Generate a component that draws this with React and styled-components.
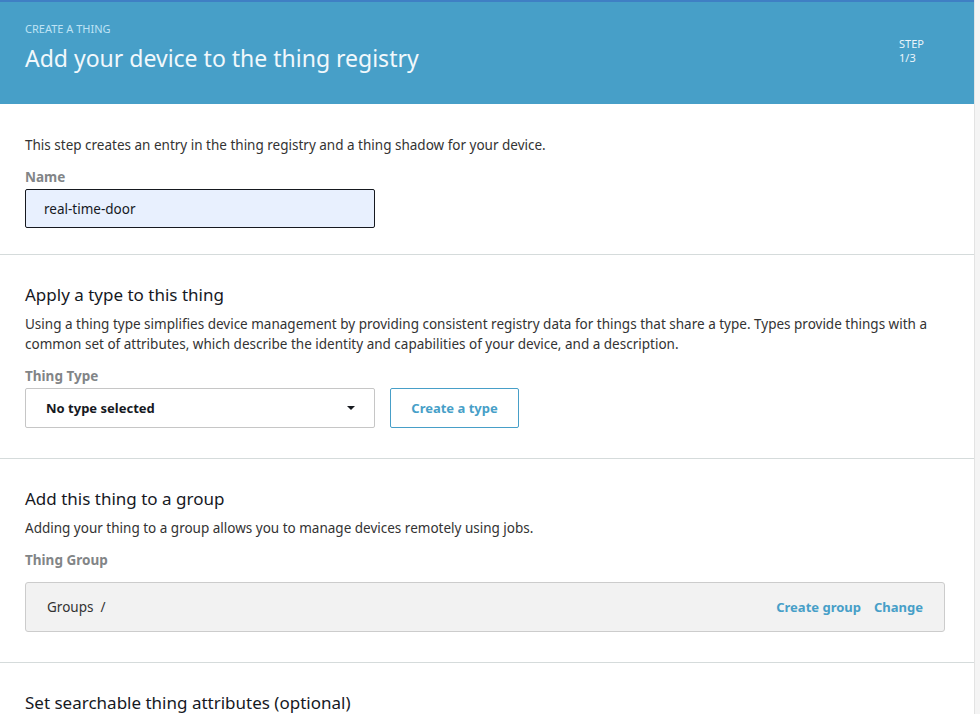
import React from 'react';
import styled, { createGlobalStyle } from 'styled-components';

const GlobalStyle = createGlobalStyle`
  html, body {
    margin: 0;
    padding: 0;
    background: #f4f4f4;
    font-family: "Noto Sans", "Open Sans", sans-serif;
    color: #16191f;
  }
`;

export default () => (
  <>
    <GlobalStyle />
    <Page>
      <Header>
        <HeaderText>
          <Eyebrow>CREATE A THING</Eyebrow>
          <Title>Add your device to the thing registry</Title>
        </HeaderText>
        <Step>
          <span>STEP</span>
          <span>1/3</span>
        </Step>
      </Header>

      <Section $first>
        <Note>This step creates an entry in the thing registry and a thing shadow for your device.</Note>
        <Label>Name</Label>
        <NameInput>real-time-door</NameInput>
      </Section>

      <Section>
        <SectionTitle>Apply a type to this thing</SectionTitle>
        <Description>
          Using a thing type simplifies device management by providing consistent registry data for things that share a type. Types provide things with a common set of attributes, which describe the identity and capabilities of your device, and a description.
        </Description>
        <Label>Thing Type</Label>
        <Row>
          <Select>
            No type selected
            <Caret />
          </Select>
          <OutlineButton>Create a type</OutlineButton>
        </Row>
      </Section>

      <Section>
        <SectionTitle>Add this thing to a group</SectionTitle>
        <Description>Adding your thing to a group allows you to manage devices remotely using jobs.</Description>
        <Label>Thing Group</Label>
        <GroupBox>
          <span>Groups&nbsp;&nbsp;/</span>
          <Links>
            <LinkText>Create group</LinkText>
            <LinkText>Change</LinkText>
          </Links>
        </GroupBox>
      </Section>

      <Section>
        <SectionTitle>Set searchable thing attributes (optional)</SectionTitle>
      </Section>
    </Page>
  </>
);

const Page = styled.div`
  width: 975px;
  min-height: 714px;
  background: #fff;
  border-right: 1px solid #e3e3e3;
  box-sizing: border-box;
  overflow: hidden;
`;

const Header = styled.div`
  height: 104px;
  background: #479fc8;
  border-top: 2px solid #3f7fc4;
  box-sizing: border-box;
  display: flex;
  justify-content: space-between;
  padding: 20px 0 0 25px;
`;

const HeaderText = styled.div`
  display: flex;
  flex-direction: column;
`;

const Eyebrow = styled.div`
  font-size: 11px;
  line-height: 14px;
  color: #bfe3f5;
`;

const Title = styled.h1`
  margin: 7px 0 0;
  font-size: 23px;
  font-weight: 400;
  line-height: 30px;
  color: #f1f8fc;
`;

const Step = styled.div`
  width: 75px;
  padding-top: 15px;
  display: flex;
  flex-direction: column;
  font-size: 11px;
  line-height: 14px;
  color: #eaf5fb;
`;

const Section = styled.div`
  padding: ${p => (p.$first ? '32px' : '27px')} 25px 26px;
  border-bottom: 1px solid #d5dbdb;
  &:last-child {
    border-bottom: none;
  }
`;

const Note = styled.p`
  margin: 0 0 14px;
  font-size: 13.5px;
  line-height: 18px;
  color: #333;
`;

const Label = styled.div`
  font-size: 13.5px;
  font-weight: 700;
  line-height: 18px;
  color: #828587;
  margin-bottom: 3px;
`;

const NameInput = styled.div`
  width: 350px;
  height: 39px;
  box-sizing: border-box;
  border: 1px solid #16191f;
  border-radius: 2px;
  background: #e8f0fe;
  display: flex;
  align-items: center;
  padding-left: 18px;
  font-size: 13.5px;
  color: #16191f;
`;

const SectionTitle = styled.h2`
  margin: 0 0 6px;
  font-size: 17px;
  font-weight: 400;
  line-height: 26px;
  color: #16191f;
`;

const Description = styled.p`
  margin: 0 0 13px;
  font-size: 13.5px;
  line-height: 20px;
  color: #333;
  max-width: 930px;
`;

const Row = styled.div`
  display: flex;
  gap: 15px;
  margin-bottom: 4px;
`;

const Select = styled.div`
  width: 350px;
  height: 40px;
  box-sizing: border-box;
  border: 1px solid #c6c6c6;
  border-radius: 2px;
  display: flex;
  align-items: center;
  justify-content: space-between;
  padding: 0 19px 0 20px;
  font-size: 13px;
  font-weight: 700;
  color: #16191f;
`;

const Caret = styled.span`
  width: 0;
  height: 0;
  border-left: 4px solid transparent;
  border-right: 4px solid transparent;
  border-top: 4px solid #16191f;
`;

const OutlineButton = styled.button`
  width: 129px;
  height: 40px;
  border: 1px solid #479fc8;
  border-radius: 2px;
  background: #fff;
  font-family: inherit;
  font-size: 13px;
  font-weight: 700;
  color: #479fc8;
`;

const GroupBox = styled.div`
  width: 920px;
  height: 50px;
  margin: 13px 0 4px;
  box-sizing: border-box;
  border: 1px solid #ccc;
  border-radius: 3px;
  background: #f2f2f2;
  display: flex;
  align-items: center;
  justify-content: space-between;
  padding: 0 21px;
  font-size: 13.5px;
  color: #333;
`;

const Links = styled.div`
  display: flex;
  gap: 13px;
  font-size: 13px;
`;

const LinkText = styled.span`
  font-weight: 700;
  color: #479fc8;
`;
